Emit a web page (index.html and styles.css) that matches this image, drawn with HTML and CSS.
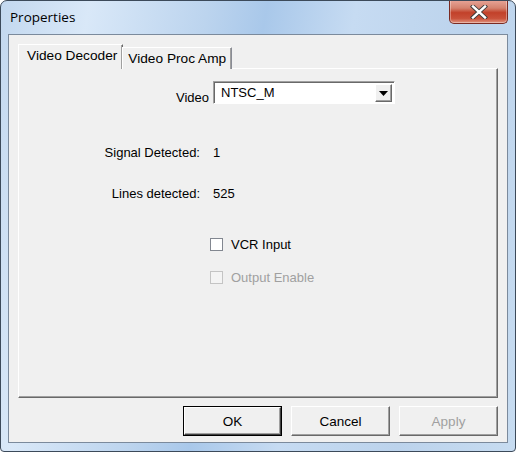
FILE: index.html
```html
<!DOCTYPE html>
<html>
<head>
<meta charset="utf-8">
<link rel="stylesheet" href="styles.css">
</head>
<body>
<div class="window">
  <div class="titlebar">
    <span class="title">Properties</span>
    <div class="close">
      <svg width="20" height="14" viewBox="0 0 20 14">
        <path d="M4 1.5 L16 12.5 M16 1.5 L4 12.5" stroke="#3a3a3a" stroke-width="4.2" stroke-linecap="square" fill="none"/>
        <path d="M4 1.5 L16 12.5 M16 1.5 L4 12.5" stroke="#fff" stroke-width="2.4" stroke-linecap="square" fill="none"/>
      </svg>
    </div>
  </div>
  <div class="client">
    <div class="tabs">
      <div class="tab active">Video Decoder</div>
      <div class="tab">Video Proc Amp</div>
    </div>
    <div class="panel">
      <div class="row-video">
        <span class="lbl">Video</span>
        <div class="select">
          <span class="sel-text">NTSC_M</span>
          <span class="sel-btn"><svg width="9" height="5" viewBox="0 0 9 5"><path d="M0 0H9L4.5 5Z" fill="#000"/></svg></span>
        </div>
      </div>
      <div class="info">
        <div class="info-row"><span class="info-lbl">Signal Detected:</span><span class="info-val">1</span></div>
        <div class="info-row"><span class="info-lbl">Lines detected:</span><span class="info-val">525</span></div>
      </div>
      <div class="checks">
        <label class="check"><span class="box"></span><span>VCR Input</span></label>
        <label class="check disabled"><span class="box"></span><span>Output Enable</span></label>
      </div>
    </div>
    <div class="buttons">
      <div class="btn default">OK</div>
      <div class="btn">Cancel</div>
      <div class="btn disabled">Apply</div>
    </div>
  </div>
</div>
</body>
</html>
```

FILE: styles.css
```css
* { box-sizing: border-box; }
html, body { margin: 0; padding: 0; background: #fff; }
body { font-family: "Liberation Sans", Arial, sans-serif; font-size: 13px; color: #000; }

.window {
  width: 516px; height: 452px;
  border: 1px solid #3c4a5a;
  border-radius: 7px 7px 4px 4px;
  background: linear-gradient(100deg, #c3d8ef 0%, #d9e8f8 15%, #bcd4ee 35%, #a9c8ea 45%, #c6dbf2 60%, #bcd3ec 80%, #c7dcf1 100%);
  display: flex; flex-direction: column;
  overflow: hidden;
}
.titlebar {
  height: 33px; display: flex; align-items: flex-start; justify-content: space-between;
  padding-left: 9px; padding-right: 7px;
}
.title { font-family: "Open Sans", "Liberation Sans", sans-serif; font-size: 13.5px; margin-top: 7px; color: #000; }
.close {
  width: 59px; height: 24px; margin-top: -1px;
  border: 1px solid #7a2a22; border-top: none;
  border-radius: 0 0 5px 5px;
  background: linear-gradient(#e8a699 0%, #d4826e 35%, #c2412a 55%, #c9513a 80%, #e0937e 100%);
  display: flex; align-items: center; justify-content: center;
  box-shadow: inset 0 0 0 1px rgba(255,255,255,0.35);
}
.client {
  flex: 1; margin: 0 7px 8px 7px;
  border: 1px solid #7b8a9c;
  background: #f0f0f0;
  padding: 9px 9px 0 9px;
  display: flex; flex-direction: column;
}
.tabs { display: flex; height: 25px; align-items: flex-end; padding-left: 1px; position: relative; z-index: 1; }
.tab {
  height: 22px; padding: 3px 5px 0 5px;
  border: 1px solid #898c95; border-bottom: none;
  border-left-color: #fff; border-top-color: #fff;
  box-shadow: inset -1px 0 0 #a0a0a0;
  background: #f0f0f0; font-size: 13.7px;
}
.tab.active { height: 25px; padding: 3px 5px 0 8px; margin-right: -1px; margin-left: -1px; border-right: 1px solid #696969; }
.panel {
  height: 330px; margin-top: -1px;
  border: 1px solid #fff; border-right-color: #696969; border-bottom-color: #696969;
  box-shadow: inset -1px -1px 0 #a0a0a0;
  background: #f0f0f0;
  padding-top: 12px;
}
.row-video { display: flex; align-items: flex-start; padding-left: 157px; height: 24px; }
.lbl { margin-right: 4px; margin-top: 9px; }
.select {
  width: 182px; height: 23px; display: flex; background: #fff;
  border: 1px solid #a0a0a0; border-right-color: #fff; border-bottom-color: #fff;
  box-shadow: inset 1px 1px 0 #696969;
  padding: 2px 2px 2px 7px;
}
.sel-text { flex: 1; padding-top: 1px; }
.sel-btn {
  width: 17px; height: 18px; display: flex; align-items: center; justify-content: center;
  background: #f0f0f0;
  border: 1px solid #fff; border-right-color: #696969; border-bottom-color: #696969;
  box-shadow: inset -1px -1px 0 #a0a0a0;
}
.info { margin-top: 41px; display: flex; flex-direction: column; gap: 28px; }
.info-row { display: flex; height: 13px; align-items: center; }
.info-lbl { width: 181px; text-align: right; }
.info-val { margin-left: 13px; }
.checks { margin-top: 38px; padding-left: 191px; display: flex; flex-direction: column; gap: 20px; }
.check { display: flex; align-items: center; gap: 8px; height: 13px; }
.box {
  width: 13px; height: 13px; background: #fff;
  border: 1px solid #828790;
}
.check.disabled { color: #a0a0a0; }
.check.disabled .box { border-color: #c4c4c4; background: #f4f4f4; }
.buttons { display: flex; justify-content: flex-end; gap: 9px; margin-top: 8px; padding-right: 0; }
.btn {
  width: 99px; height: 30px; display: flex; align-items: center; justify-content: center;
  border: 1px solid #fff; border-right-color: #696969; border-bottom-color: #696969;
  box-shadow: inset -1px -1px 0 #a0a0a0;
  background: #f0f0f0; font-size: 13.5px;
}
.btn.default { outline: 1px solid #000; outline-offset: -1px; border: 2px solid; border-color: #fff #404040 #404040 #fff; box-shadow: inset -1px -1px 0 #a0a0a0; }
.btn.disabled { color: #a0a0a0; }
```
